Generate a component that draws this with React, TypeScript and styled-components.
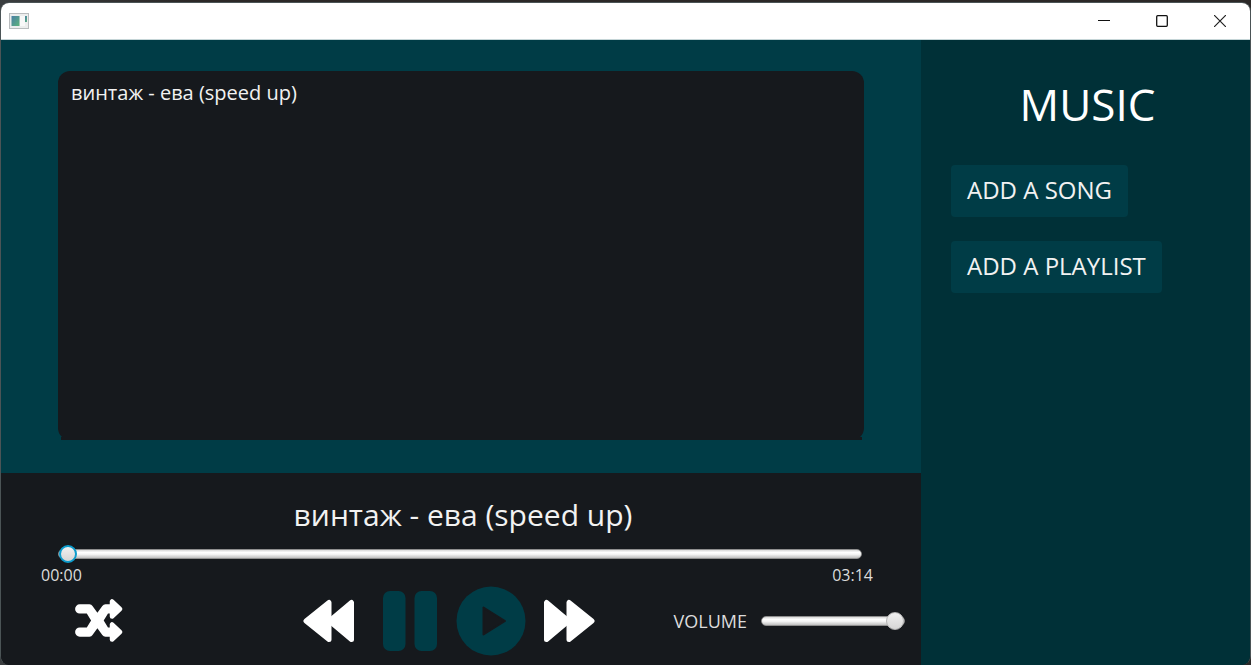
import React, { useState } from "react";
import styled, { createGlobalStyle } from "styled-components";

const teal = "#003c46";
const deepTeal = "#003037";
const ink = "#16191d";

const GlobalStyle = createGlobalStyle`
  *, *::before, *::after { box-sizing: border-box; }
  body {
    margin: 0;
    background: #2b2a29;
    color: #f2f2f2;
    font-family: "Open Sans", "Noto Sans", sans-serif;
  }
  button { font: inherit; color: inherit; border: 0; background: none; padding: 0; cursor: pointer; }
  h1, h2, ul { margin: 0; padding: 0; font-weight: 400; }
`;

const Desktop = styled.div`
  display: flex;
  min-height: 100vh;
  padding-top: 2px;
  background: linear-gradient(90deg, #3a3d3f, #2b2827 15%);
`;

const Window = styled.div`
  flex: 1;
  display: flex;
  flex-direction: column;
  border: 1px solid #4b5456;
  border-bottom: 0;
  border-radius: 9px;
  overflow: hidden;
  background: ${ink};
`;

const TitleBar = styled.header`
  display: flex;
  align-items: center;
  justify-content: space-between;
  height: 37px;
  padding: 0 1px 1px 8px;
  background: #fff;
  border-bottom: 1px solid #c5d5d7;
`;

const WindowButtons = styled.div`
  display: flex;
`;

const WindowButton = styled.button`
  display: flex;
  align-items: center;
  justify-content: center;
  width: 58px;
  height: 34px;
`;

const Body = styled.div`
  flex: 1;
  display: flex;
`;

const Main = styled.main`
  flex: 1;
  min-width: 0;
  display: flex;
  flex-direction: column;
`;

const Library = styled.section`
  flex: 1;
  display: flex;
  padding: 31px 57px 33px 57px;
  background: ${teal};
`;

const SongList = styled.ul`
  position: relative;
  flex: 1;
  padding: 8px 13px;
  border-radius: 12px;
  background: ${ink};
  list-style: none;

  &::after {
    content: "";
    position: absolute;
    left: 3px;
    right: 2px;
    bottom: 0;
    height: 3px;
    background: ${ink};
  }
`;

const Song = styled.button`
  font-size: 20px;
  line-height: 28px;
`;

const Player = styled.section`
  display: flex;
  flex-direction: column;
  height: 192px;
  background: ${ink};
`;

const NowPlaying = styled.h2`
  padding: 22px 0 0 4px;
  font-size: 30px;
  line-height: 40px;
  text-align: center;
`;

const Range = styled.input<{ $focused?: boolean }>`
  appearance: none;
  display: block;
  width: 100%;
  height: 20px;
  margin: 0;
  background: transparent;
  outline: none;

  &::-webkit-slider-runnable-track {
    height: 10px;
    border: 1px solid #8f8f8f;
    border-radius: 5px;
    background: linear-gradient(#d8d8d8, #ffffff 30%, #f4f4f4 55%, #c0c0c0);
  }

  &::-webkit-slider-thumb {
    appearance: none;
    width: 18px;
    height: 18px;
    margin-top: -5px;
    border: ${(p) => (p.$focused ? "2px solid #0c9bcb" : "1px solid #b4b4b4")};
    border-radius: 50%;
    background: linear-gradient(#f0f0f0, #d6d6d6);
  }
`;

const Seek = styled.div`
  padding: 9px 59px 0 57px;
`;

const Times = styled.div`
  display: flex;
  justify-content: space-between;
  padding: 0 48px 0 40px;
  font-size: 16px;
  line-height: 22px;
  color: #dcdcdc;
`;

const Controls = styled.div`
  display: flex;
  align-items: center;
  height: 70px;
  padding: 0 16px 0 73px;
`;

const IconButton = styled.button`
  display: flex;
`;

const Transport = styled.div`
  display: flex;
  align-items: center;
  margin-left: auto;
`;

const PauseButton = styled(IconButton)`
  margin: 0 19px 0 29px;
`;

const NextButton = styled(IconButton)`
  margin-left: 18px;
`;

const Volume = styled.label`
  display: flex;
  align-items: center;
  gap: 14px;
  margin-left: 79px;
  font-size: 18px;
  line-height: 24px;
  color: #dcdcdc;
`;

const VolumeTrack = styled.div`
  width: 144px;
`;

const Sidebar = styled.aside`
  display: flex;
  flex-direction: column;
  align-items: flex-start;
  gap: 24px;
  width: 329px;
  padding: 34px 30px;
  background: ${deepTeal};
`;

const Brand = styled.h1`
  align-self: center;
  padding-left: 4px;
  margin-bottom: 7px;
  font-size: 44px;
  line-height: 60px;
  color: #fff;
`;

const AddButton = styled.button`
  height: 52px;
  padding: 0 16px 2px;
  border-radius: 4px;
  background: ${teal};
  font-size: 24px;
  line-height: 32px;
`;

const AppIcon = () => (
  <svg width="20" height="16" viewBox="0 0 20 16" aria-hidden="true">
    <defs>
      <linearGradient id="pane" x1="0" y1="0" x2="1" y2="1">
        <stop offset="0" stopColor="#4a7fa5" />
        <stop offset="1" stopColor="#5db37c" />
      </linearGradient>
    </defs>
    <rect x="0.5" y="0.5" width="19" height="15" fill="#eceded" stroke="#b9bcbe" />
    <rect x="2.5" y="3" width="8" height="10" fill="url(#pane)" />
    <rect x="11" y="3" width="5" height="10" fill="#f8f8f8" />
    <rect x="16" y="3" width="2" height="6" fill="url(#pane)" />
  </svg>
);

const ShuffleIcon = () => (
  <svg width="50" height="44" viewBox="0 0 50 44" fill="#fff" strokeLinejoin="round" aria-hidden="true">
    <path d="M5.700 5.300H15.500Q17.500 5.300 18.500 7L23.400 13.800L28.300 7Q29.500 5.300 31.500 5.300H38V14.500H34L29.700 21.500L34 28.500H38V37.700H31.500Q29.500 37.700 28.300 36L23.400 29.200L18.500 36Q17.500 37.700 15.500 37.700H5.700a4.600 4.600 0 0 1 0-9.200H12.800L17.100 21.500L12.800 14.500H5.700a4.600 4.600 0 0 1 0-9.200Z" />
    <path d="M38 2.500V17.500L46 10ZM38 25.500V40.500L46 33Z" stroke="#fff" strokeWidth="4.500" />
  </svg>
);

const SkipIcon = ({ back }: { back?: boolean }) => (
  <svg width="51" height="44" viewBox="0 0 51 44" fill="#fff" stroke="#fff" strokeWidth="5" strokeLinejoin="round" aria-hidden="true">
    <g transform={back ? "matrix(-1 0 0 1 51 0)" : undefined}>
      <path d="M2.500 3.500V40.500L24.500 22Z" />
      <path d="M25 3.500V40.500L48 22Z" />
    </g>
  </svg>
);

const PauseIcon = () => (
  <svg width="54" height="60" viewBox="0 0 54 60" fill={teal} aria-hidden="true">
    <rect width="22.500" height="60" rx="7" />
    <rect x="31.500" width="22.500" height="60" rx="7" />
  </svg>
);

const PlayIcon = () => (
  <svg width="70" height="70" viewBox="0 0 70 70" aria-hidden="true">
    <circle cx="35" cy="35" r="34.500" fill={teal} />
    <path d="M27.500 21.500V48.500L49 35Z" fill={ink} stroke={ink} strokeWidth="2" strokeLinejoin="round" />
  </svg>
);

export default function App() {
  const [position, setPosition] = useState(0);
  const [volume, setVolume] = useState(100);
  const song = "винтаж - ева (speed up)";

  return (
    <>
      <GlobalStyle />
      <Desktop>
        <Window>
          <TitleBar>
            <AppIcon />
            <WindowButtons>
              <WindowButton aria-label="Minimize">
                <svg width="12" height="12" stroke="#111"><path d="M0 5.500H12" /></svg>
              </WindowButton>
              <WindowButton aria-label="Maximize">
                <svg width="12" height="12" fill="none" stroke="#111" strokeWidth="1.300"><rect x="0.700" y="0.700" width="10.600" height="10.600" rx="1" /></svg>
              </WindowButton>
              <WindowButton aria-label="Close">
                <svg width="12" height="12" stroke="#222" strokeWidth="1.200"><path d="M0 0L12 12M12 0L0 12" /></svg>
              </WindowButton>
            </WindowButtons>
          </TitleBar>
          <Body>
            <Main>
              <Library>
                <SongList>
                  <li><Song>{song}</Song></li>
                </SongList>
              </Library>
              <Player>
                <NowPlaying>{song}</NowPlaying>
                <Seek>
                  <Range
                    type="range"
                    aria-label="Position"
                    min={0}
                    max={194}
                    value={position}
                    $focused
                    onChange={(e) => setPosition(Number(e.target.value))}
                  />
                </Seek>
                <Times>
                  <span>00:00</span>
                  <span>03:14</span>
                </Times>
                <Controls>
                  <IconButton aria-label="Shuffle"><ShuffleIcon /></IconButton>
                  <Transport>
                    <IconButton aria-label="Previous"><SkipIcon back /></IconButton>
                    <PauseButton aria-label="Pause"><PauseIcon /></PauseButton>
                    <IconButton aria-label="Play"><PlayIcon /></IconButton>
                    <NextButton aria-label="Next"><SkipIcon /></NextButton>
                  </Transport>
                  <Volume>
                    VOLUME
                    <VolumeTrack>
                      <Range
                        type="range"
                        min={0}
                        max={100}
                        value={volume}
                        onChange={(e) => setVolume(Number(e.target.value))}
                      />
                    </VolumeTrack>
                  </Volume>
                </Controls>
              </Player>
            </Main>
            <Sidebar>
              <Brand>MUSIC</Brand>
              <AddButton>ADD A SONG</AddButton>
              <AddButton>ADD A PLAYLIST</AddButton>
            </Sidebar>
          </Body>
        </Window>
      </Desktop>
    </>
  );
}
